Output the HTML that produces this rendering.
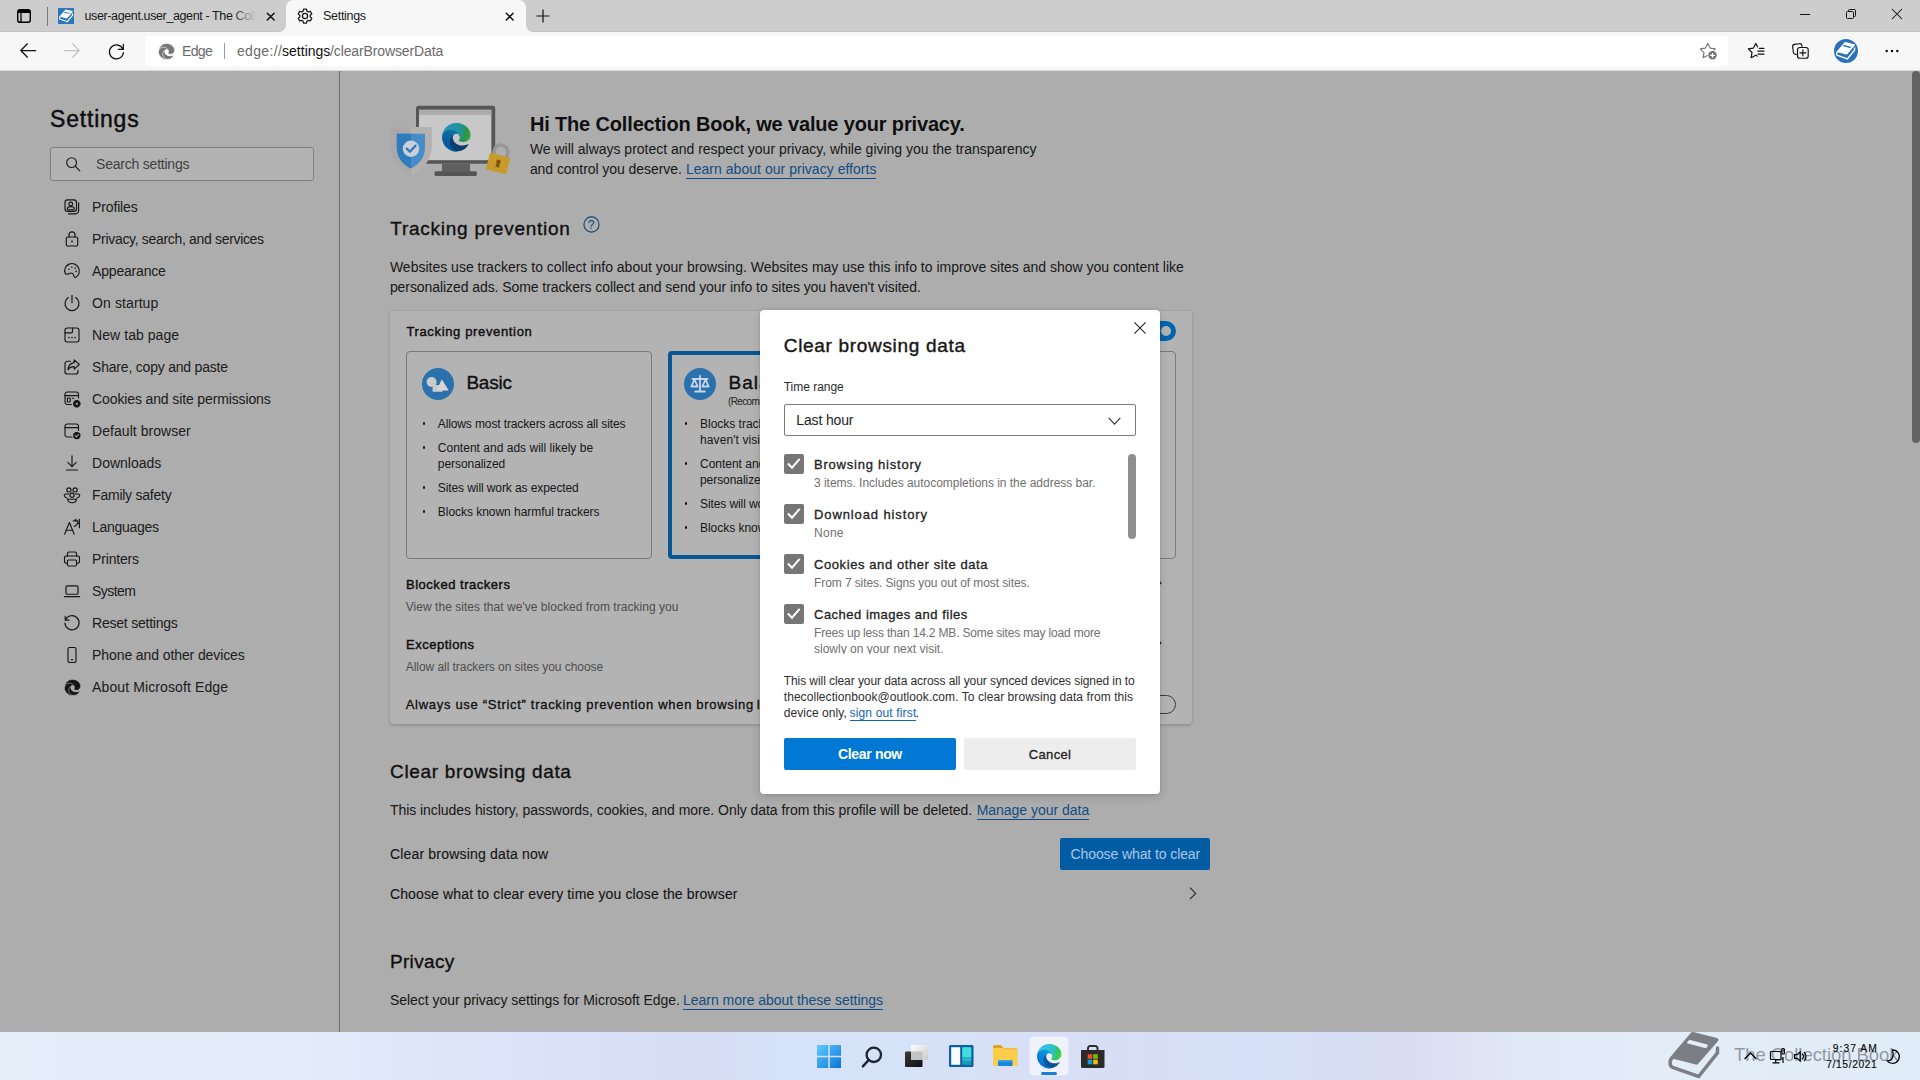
<!DOCTYPE html><html lang="en"><head><meta charset="utf-8"><title>Settings</title><style>

*{margin:0;padding:0;box-sizing:border-box}
html,body{width:1920px;height:1080px;overflow:hidden;background:#f7f7f7;font-family:"Liberation Sans",sans-serif}
.t{position:absolute;white-space:nowrap;display:block}
.i{position:absolute;overflow:visible}
.b{position:absolute}
a{color:inherit}

</style></head><body>
<div class="b" style="left:339px;top:71px;width:1px;height:961px;background:#9c9c9c"></div>
<span class="t" style="left:50.10px;top:107.62px;font-size:23px;line-height:23px;color:#141414;-webkit-text-stroke:0.45px currentColor;letter-spacing:0.784px;">Settings</span>
<div class="b" style="left:50px;top:147px;width:264px;height:34px;border:1px solid #b6b6b6;border-radius:3px;background:#fff"></div>
<svg class="i" style="left:65px;top:156px" width="16" height="16" viewBox="0 0 16 16" ><circle cx="6.600" cy="6.600" r="4.900" fill="none" stroke="#222" stroke-width="1.150"/><path d="M10.200 10.200l4.600 4.600" stroke="#222" stroke-width="1.150" stroke-linecap="round"/></svg>
<span class="t" style="left:96.10px;top:157.12px;font-size:14px;line-height:14px;color:#5c5c5c;letter-spacing:-0.221px;">Search settings</span>
<svg class="i" style="left:62px;top:197px" width="20" height="20" viewBox="0 0 20 20" ><g fill="none" stroke="#1f1f1f" stroke-width="1.15" stroke-linecap="round" stroke-linejoin="round"><rect x="3" y="2.8" width="11.5" height="11.5" rx="2.6"/><circle cx="8.75" cy="7" r="1.9"/><path d="M5.3 11.6c0-1.3 1.2-2 3.45-2s3.45.7 3.45 2c0 .9-.5 1.3-1.2 1.3H6.5c-.7 0-1.2-.4-1.2-1.3z"/><path d="M16.6 5.8v8a3 3 0 0 1-3 3H6.4"/></g></svg>
<span class="t" style="left:92.10px;top:200.12px;font-size:14px;line-height:14px;color:#2b2b2b;letter-spacing:-0.155px;">Profiles</span>
<svg class="i" style="left:62px;top:229px" width="20" height="20" viewBox="0 0 20 20" ><g fill="none" stroke="#1f1f1f" stroke-width="1.15" stroke-linecap="round" stroke-linejoin="round"><rect x="4.3" y="8" width="11.4" height="9" rx="1.6"/><path d="M7 8V5.8a3 3 0 0 1 6 0V8"/><circle cx="10" cy="12.5" r="0.9" fill="#1f1f1f" stroke="none"/></g></svg>
<span class="t" style="left:92.10px;top:232.12px;font-size:14px;line-height:14px;color:#2b2b2b;letter-spacing:-0.323px;">Privacy, search, and services</span>
<svg class="i" style="left:62px;top:261px" width="20" height="20" viewBox="0 0 20 20" ><g fill="none" stroke="#1f1f1f" stroke-width="1.15" stroke-linecap="round" stroke-linejoin="round"><path d="M3.2 12.2C1.7 8.6 3.5 4.6 7.2 3.1c3.7-1.5 7.9.2 9.4 3.9 1.3 3.2.6 6.6-2.1 8.9-1.1.9-2.5.2-2.7-1-.2-1.300-.5-2.200-1.700-2.700-1.500-.600-2.300.200-3.600.700-1.300.500-2.800.500-3.300-.700z"/><circle cx="7" cy="8.300" r=".8" fill="#1f1f1f" stroke="none"/><circle cx="9.800" cy="6.200" r=".8" fill="#1f1f1f" stroke="none"/><circle cx="13" cy="7.300" r=".8" fill="#1f1f1f" stroke="none"/><circle cx="14.200" cy="10.400" r=".8" fill="#1f1f1f" stroke="none"/></g></svg>
<span class="t" style="left:92.10px;top:264.12px;font-size:14px;line-height:14px;color:#2b2b2b;letter-spacing:-0.191px;">Appearance</span>
<svg class="i" style="left:62px;top:293px" width="20" height="20" viewBox="0 0 20 20" ><g fill="none" stroke="#1f1f1f" stroke-width="1.15" stroke-linecap="round" stroke-linejoin="round"><path d="M10 2.500v7.200"/><path d="M6.400 4.600a7 7 0 1 0 7.200 0"/></g></svg>
<span class="t" style="left:92.10px;top:296.12px;font-size:14px;line-height:14px;color:#2b2b2b;letter-spacing:0.092px;">On startup</span>
<svg class="i" style="left:62px;top:325px" width="20" height="20" viewBox="0 0 20 20" ><g fill="none" stroke="#1f1f1f" stroke-width="1.15" stroke-linecap="round" stroke-linejoin="round"><rect x="3" y="3" width="14" height="14" rx="2.200"/><path d="M3 7.800h6.200c.8 0 1.300-.5 1.300-1.300V3"/><circle cx="7" cy="12.600" r=".8" fill="#1f1f1f" stroke="none"/><circle cx="10" cy="12.600" r=".8" fill="#1f1f1f" stroke="none"/><circle cx="13" cy="12.600" r=".8" fill="#1f1f1f" stroke="none"/></g></svg>
<span class="t" style="left:92.10px;top:328.12px;font-size:14px;line-height:14px;color:#2b2b2b;letter-spacing:0.054px;">New tab page</span>
<svg class="i" style="left:62px;top:357px" width="20" height="20" viewBox="0 0 20 20" ><g fill="none" stroke="#1f1f1f" stroke-width="1.15" stroke-linecap="round" stroke-linejoin="round"><path d="M8.500 4.200H5.600A2.600 2.600 0 0 0 3 6.800v7.600A2.600 2.600 0 0 0 5.600 17h7.800a2.600 2.600 0 0 0 2.600-2.600v-1.200"/><path d="M12.200 2.800l5.100 4.700-5.100 4.700V9.600c-2.900 0-4.800 1-6.200 3.200.4-4 2.400-6.700 6.200-7.200z"/></g></svg>
<span class="t" style="left:92.10px;top:360.12px;font-size:14px;line-height:14px;color:#2b2b2b;letter-spacing:-0.210px;">Share, copy and paste</span>
<svg class="i" style="left:62px;top:389px" width="20" height="20" viewBox="0 0 20 20" ><g fill="none" stroke="#1f1f1f" stroke-width="1.15" stroke-linecap="round" stroke-linejoin="round"><path d="M16.500 9V5.200A2.200 2.200 0 0 0 14.300 3H5.200A2.200 2.200 0 0 0 3 5.200v8.100a2.200 2.200 0 0 0 2.200 2.200H9.500"/><path d="M3 6.600h13.500"/><rect x="5.400" y="9" width="2.800" height="4" rx=".4"/><path d="M10.400 9.200h1.400"/><circle cx="14.800" cy="14.800" r="3" fill="#1f1f1f" stroke="#1f1f1f" stroke-width="1.600" stroke-dasharray="1.500 .86"/><circle cx="14.800" cy="14.800" r="1.100" fill="#f7f7f7" stroke="none"/></g></svg>
<span class="t" style="left:92.10px;top:392.12px;font-size:14px;line-height:14px;color:#2b2b2b;letter-spacing:-0.126px;">Cookies and site permissions</span>
<svg class="i" style="left:62px;top:421px" width="20" height="20" viewBox="0 0 20 20" ><g fill="none" stroke="#1f1f1f" stroke-width="1.15" stroke-linecap="round" stroke-linejoin="round"><path d="M16.500 9.500V5.200A2.200 2.200 0 0 0 14.300 3H5.200A2.200 2.200 0 0 0 3 5.200v8.600A2.200 2.200 0 0 0 5.200 16H10"/><path d="M3 6.600h13.500"/><circle cx="14.800" cy="14.600" r="3.700" fill="#1f1f1f" stroke="none"/><path d="M13.100 14.700l1.200 1.200 2.200-2.400" stroke="#f7f7f7" stroke-width="1.100"/></g></svg>
<span class="t" style="left:92.10px;top:424.12px;font-size:14px;line-height:14px;color:#2b2b2b;letter-spacing:0.040px;">Default browser</span>
<svg class="i" style="left:62px;top:453px" width="20" height="20" viewBox="0 0 20 20" ><g fill="none" stroke="#1f1f1f" stroke-width="1.15" stroke-linecap="round" stroke-linejoin="round"><path d="M10 2.800v10.600"/><path d="M5.800 9.400l4.200 4.200 4.200-4.200"/><path d="M4.500 17h11"/></g></svg>
<span class="t" style="left:92.10px;top:456.12px;font-size:14px;line-height:14px;color:#2b2b2b;letter-spacing:-0.008px;">Downloads</span>
<svg class="i" style="left:62px;top:485px" width="20" height="20" viewBox="0 0 20 20" ><g fill="none" stroke="#1f1f1f" stroke-width="1.15" stroke-linecap="round" stroke-linejoin="round"><circle cx="6.900" cy="4.900" r="2.100"/><circle cx="13.100" cy="4.900" r="2.100"/><circle cx="10" cy="10.200" r="2.100"/><path d="M6.600 9H3.900c-1.200 0-1.800.9-1.500 1.900.3.900 1.100 1.900 3 2.300"/><path d="M13.400 9h2.700c1.200 0 1.800.9 1.500 1.900-.3.900-1.100 1.900-3 2.300"/><path d="M5.600 14.200h8.800c0 1.900-1.600 3.500-4.400 3.500s-4.400-1.600-4.400-3.500z"/></g></svg>
<span class="t" style="left:92.10px;top:488.12px;font-size:14px;line-height:14px;color:#2b2b2b;letter-spacing:-0.239px;">Family safety</span>
<svg class="i" style="left:62px;top:517px" width="20" height="20" viewBox="0 0 20 20" ><g fill="none" stroke="#1f1f1f" stroke-width="1.15" stroke-linecap="round" stroke-linejoin="round"><path d="M2.600 17.200L7.400 5.500l4.800 11.700"/><path d="M4.400 13.200h6"/><path d="M11.300 3.800h4.600c0 2.900-1.400 4.700-3.600 5.700"/><path d="M13.500 2.300v1.500"/><path d="M17.400 2.300v8.400"/><path d="M15.900 6.300h1.500"/></g></svg>
<span class="t" style="left:92.10px;top:520.12px;font-size:14px;line-height:14px;color:#2b2b2b;letter-spacing:-0.312px;">Languages</span>
<svg class="i" style="left:62px;top:549px" width="20" height="20" viewBox="0 0 20 20" ><g fill="none" stroke="#1f1f1f" stroke-width="1.15" stroke-linecap="round" stroke-linejoin="round"><path d="M5.500 7V4.600A1.600 1.600 0 0 1 7.100 3h5.800a1.600 1.600 0 0 1 1.600 1.600V7"/><path d="M5.300 14.200H4.200a1.700 1.700 0 0 1-1.700-1.700V8.700A1.700 1.700 0 0 1 4.200 7h11.600a1.700 1.700 0 0 1 1.700 1.700v3.800a1.700 1.700 0 0 1-1.700 1.700h-1.100"/><rect x="5.400" y="11" width="9.200" height="6" rx="1.200"/></g></svg>
<span class="t" style="left:92.10px;top:552.12px;font-size:14px;line-height:14px;color:#2b2b2b;letter-spacing:-0.191px;">Printers</span>
<svg class="i" style="left:62px;top:581px" width="20" height="20" viewBox="0 0 20 20" ><g fill="none" stroke="#1f1f1f" stroke-width="1.15" stroke-linecap="round" stroke-linejoin="round"><rect x="4" y="4.800" width="12" height="8.400" rx="1.300"/><path d="M2.300 15.600h15.400"/></g></svg>
<span class="t" style="left:92.10px;top:584.12px;font-size:14px;line-height:14px;color:#2b2b2b;letter-spacing:-0.557px;">System</span>
<svg class="i" style="left:62px;top:613px" width="20" height="20" viewBox="0 0 20 20" ><g fill="none" stroke="#1f1f1f" stroke-width="1.15" stroke-linecap="round" stroke-linejoin="round"><path d="M3.200 3.200v3.900h3.900"/><path d="M3.500 6.900A7.100 7.100 0 1 1 2.900 10"/></g></svg>
<span class="t" style="left:92.10px;top:616.12px;font-size:14px;line-height:14px;color:#2b2b2b;letter-spacing:-0.232px;">Reset settings</span>
<svg class="i" style="left:62px;top:645px" width="20" height="20" viewBox="0 0 20 20" ><g fill="none" stroke="#1f1f1f" stroke-width="1.15" stroke-linecap="round" stroke-linejoin="round"><rect x="6" y="2.500" width="8" height="15" rx="1.600"/><path d="M9 14.700h2"/></g></svg>
<span class="t" style="left:92.10px;top:648.12px;font-size:14px;line-height:14px;color:#2b2b2b;letter-spacing:-0.100px;">Phone and other devices</span>
<svg class="i" style="left:63.5px;top:678.5px" width="17" height="17" viewBox="-6 -6 268 268" ><path d="M231.05 190.54a93.73 93.73 0 01-10.54 4.71 101.87 101.87 0 01-35.9 6.46c-47.32 0-88.54-32.55-88.54-74.32A31.48 31.48 0 01112.5 100.1c-42.8 1.8-53.8 46.4-53.8 72.53 0 73.88 68.09 81.37 82.76 81.37 7.91 0 19.84-2.3 27-4.56l1.31-.44a128.34 128.34 0 0066.6-52.8 4 4 0 00-5.32-5.66z" fill="#1f1f1f"/><path d="M105.73 241.42a79.2 79.2 0 01-22.74-21.34 80.72 80.72 0 0129.53-120c3.12-1.47 8.45-4.13 15.54-4a32.35 32.35 0 0125.69 13 31.88 31.88 0 016.36 18.66c0-.21 24.46-79.6-80-79.6-43.9 0-80 41.66-80 78.21a130.15 130.15 0 0012.11 56 128 128 0 00156.38 67.11 75.55 75.55 0 01-62.78-8z" fill="#1f1f1f" stroke="#f7f7f7" stroke-width="9"/><path d="M152.33 148.86c-.81 1.05-3.3 2.5-3.3 5.66 0 2.61 1.7 5.12 4.72 7.23 14.38 10 41.49 8.68 41.56 8.68a59.56 59.56 0 0030.27-8.35A61.38 61.38 0 00256 109.2c.26-22.41-8-37.31-11.34-43.91C223.48 23.86 177.74 0 128 0A128 128 0 000 126.2c.48-36.54 36.8-66.05 80-66.05 3.5 0 23.46.34 42 10.07 16.34 8.58 24.9 18.94 30.85 29.21 6.18 10.67 7.28 24.15 7.28 29.52s-2.74 13.33-7.8 19.91z" fill="#1f1f1f" stroke="#f7f7f7" stroke-width="9"/></svg>
<span class="t" style="left:92.10px;top:680.12px;font-size:14px;line-height:14px;color:#2b2b2b;letter-spacing:0.107px;">About Microsoft Edge</span>
<span class="t" style="left:529.90px;top:114.12px;font-size:20px;line-height:20px;color:#161616;font-weight:700;letter-spacing:-0.155px;">Hi The Collection Book, we value your privacy.</span>
<span class="t" style="left:529.90px;top:142.12px;font-size:14px;line-height:14px;color:#262626;letter-spacing:-0.012px;">We will always protect and respect your privacy, while giving you the transparency</span>
<span class="t" style="left:529.90px;top:162.12px;font-size:14px;line-height:14px;color:#262626;letter-spacing:-0.058px;">and control you deserve.</span>
<span class="t" style="left:685.90px;top:162.12px;font-size:14px;line-height:14px;color:#1a6dbb;letter-spacing:0.032px;">Learn about our privacy efforts</span><div class="b" style="left:685.9px;top:178.25px;width:190.6px;height:1px;background:#1a6dbb"></div>
<span class="t" style="left:390.30px;top:219.12px;font-size:19px;line-height:19px;color:#161616;-webkit-text-stroke:0.35px currentColor;letter-spacing:0.746px;">Tracking prevention</span>
<svg class="i" style="left:582.5px;top:216.3px" width="17" height="17" viewBox="0 0 17 17" ><circle cx="8.500" cy="8.500" r="7.600" fill="none" stroke="#0f65b3" stroke-width="1.100"/></svg><span class="t" style="left:587.70px;top:219.12px;font-size:12px;line-height:12px;color:#0f65b3;">?</span>
<span class="t" style="left:389.90px;top:260.12px;font-size:14px;line-height:14px;color:#262626;">Websites use trackers to collect info about your browsing. Websites may use this info to improve sites and show you content like</span>
<span class="t" style="left:389.90px;top:280.12px;font-size:14px;line-height:14px;color:#262626;letter-spacing:-0.072px;">personalized ads. Some trackers collect and send your info to sites you haven't visited.</span>
<div class="b" style="left:390px;top:311px;width:802px;height:413px;background:#fff;border-radius:4px;box-shadow:0 1.600px 3.600px rgba(0,0,0,.13),0 0 2.900px rgba(0,0,0,.11)"></div>
<span class="t" style="left:406.40px;top:325.12px;font-size:13px;line-height:13px;color:#161616;-webkit-text-stroke:0.42px currentColor;letter-spacing:0.648px;">Tracking prevention</span>
<div class="b" style="left:1136px;top:321px;width:40px;height:20px;border-radius:10px;background:#008ffa"></div><div class="b" style="left:1161.200px;top:326px;width:10px;height:10px;border-radius:5px;background:#fff"></div>
<div class="b" style="left:406px;top:351px;width:246px;height:207.500px;border:1px solid #aeaeae;border-radius:4px"></div>
<span class="t" style="left:466.40px;top:373.12px;font-size:19px;line-height:19px;color:#161616;-webkit-text-stroke:0.35px currentColor;letter-spacing:-0.242px;">Basic</span>
<div class="b" style="left:422.5px;top:421.8px;width:2.800px;height:2.800px;background:#222;border-radius:1.400px"></div><span class="t" style="left:437.80px;top:418.12px;font-size:12px;line-height:12px;color:#262626;letter-spacing:-0.121px;">Allows most trackers across all sites</span><div class="b" style="left:422.5px;top:445.8px;width:2.800px;height:2.800px;background:#222;border-radius:1.400px"></div><span class="t" style="left:437.80px;top:442.12px;font-size:12px;line-height:12px;color:#262626;letter-spacing:0.018px;">Content and ads will likely be</span><span class="t" style="left:437.80px;top:458.12px;font-size:12px;line-height:12px;color:#262626;letter-spacing:-0.059px;">personalized</span><div class="b" style="left:422.5px;top:485.8px;width:2.800px;height:2.800px;background:#222;border-radius:1.400px"></div><span class="t" style="left:437.80px;top:482.12px;font-size:12px;line-height:12px;color:#262626;letter-spacing:-0.092px;">Sites will work as expected</span><div class="b" style="left:422.5px;top:509.8px;width:2.800px;height:2.800px;background:#222;border-radius:1.400px"></div><span class="t" style="left:437.80px;top:506.12px;font-size:12px;line-height:12px;color:#262626;letter-spacing:-0.037px;">Blocks known harmful trackers</span>
<div class="b" style="left:668px;top:351px;width:246px;height:207.500px;border:4px solid #0c7bd3;border-radius:4px"></div>
<span class="t" style="left:728.50px;top:373.12px;font-size:19px;line-height:19px;color:#161616;-webkit-text-stroke:0.35px currentColor;letter-spacing:1.038px;">Balanced</span>
<span class="t" style="left:728.00px;top:396.62px;font-size:10px;line-height:10px;color:#333;letter-spacing:-0.624px;">(Recommended)</span>
<div class="b" style="left:684.7px;top:421.8px;width:2.800px;height:2.800px;background:#222;border-radius:1.400px"></div><span class="t" style="left:700.00px;top:418.12px;font-size:12px;line-height:12px;color:#262626;letter-spacing:-0.013px;">Blocks trackers from sites you</span><span class="t" style="left:700.00px;top:434.12px;font-size:12px;line-height:12px;color:#262626;letter-spacing:0.095px;">haven't visited</span><div class="b" style="left:684.7px;top:461.8px;width:2.800px;height:2.800px;background:#222;border-radius:1.400px"></div><span class="t" style="left:700.00px;top:458.12px;font-size:12px;line-height:12px;color:#262626;letter-spacing:-0.013px;">Content and ads will likely be less</span><span class="t" style="left:700.00px;top:474.12px;font-size:12px;line-height:12px;color:#262626;letter-spacing:-0.059px;">personalized</span><div class="b" style="left:684.7px;top:501.8px;width:2.800px;height:2.800px;background:#222;border-radius:1.400px"></div><span class="t" style="left:700.00px;top:498.12px;font-size:12px;line-height:12px;color:#262626;letter-spacing:-0.092px;">Sites will work as expected</span><div class="b" style="left:684.7px;top:525.8px;width:2.800px;height:2.800px;background:#222;border-radius:1.400px"></div><span class="t" style="left:700.00px;top:522.12px;font-size:12px;line-height:12px;color:#262626;letter-spacing:-0.037px;">Blocks known harmful trackers</span>
<div class="b" style="left:930px;top:351px;width:246px;height:207.500px;border:1px solid #aeaeae;border-radius:4px"></div>
<span class="t" style="left:406.00px;top:578.12px;font-size:13px;line-height:13px;color:#161616;-webkit-text-stroke:0.42px currentColor;letter-spacing:0.520px;">Blocked trackers</span>
<span class="t" style="left:405.75px;top:601.12px;font-size:12px;line-height:12px;color:#707070;letter-spacing:0.037px;">View the sites that we've blocked from tracking you</span>
<span class="t" style="left:406.00px;top:638.12px;font-size:13px;line-height:13px;color:#161616;-webkit-text-stroke:0.42px currentColor;letter-spacing:0.501px;">Exceptions</span>
<span class="t" style="left:405.75px;top:661.12px;font-size:12px;line-height:12px;color:#707070;letter-spacing:-0.054px;">Allow all trackers on sites you choose</span>
<span class="t" style="left:405.75px;top:698.12px;font-size:13px;line-height:13px;color:#161616;-webkit-text-stroke:0.3px currentColor;letter-spacing:0.694px;">Always use “Strict” tracking prevention when browsing</span>
<span class="t" style="left:756.50px;top:698.12px;font-size:13px;line-height:13px;color:#161616;-webkit-text-stroke:0.3px currentColor;letter-spacing:0.711px;">InPrivate</span>
<svg class="i" style="left:1156px;top:578px" width="6" height="10" viewBox="0 0 6 10" ><path d="M.8 .8L5 5 .8 9.200" fill="none" stroke="#333" stroke-width="1.100"/></svg>
<svg class="i" style="left:1156px;top:638px" width="6" height="10" viewBox="0 0 6 10" ><path d="M.8 .8L5 5 .8 9.200" fill="none" stroke="#333" stroke-width="1.100"/></svg>
<div class="b" style="left:1136px;top:694.500px;width:40px;height:19.500px;border-radius:10px;border:1px solid #555"></div>
<span class="t" style="left:390.10px;top:762.12px;font-size:19px;line-height:19px;color:#161616;-webkit-text-stroke:0.35px currentColor;letter-spacing:0.656px;">Clear browsing data</span>
<span class="t" style="left:389.90px;top:803.12px;font-size:14px;line-height:14px;color:#262626;letter-spacing:-0.043px;">This includes history, passwords, cookies, and more. Only data from this profile will be deleted.</span>
<span class="t" style="left:976.70px;top:803.12px;font-size:14px;line-height:14px;color:#1a6dbb;letter-spacing:-0.024px;">Manage your data</span><div class="b" style="left:976.7px;top:819px;width:112.5px;height:1px;background:#1a6dbb"></div>
<span class="t" style="left:389.90px;top:847.12px;font-size:14px;line-height:14px;color:#1c1c1c;-webkit-text-stroke:0.12px currentColor;letter-spacing:0.187px;">Clear browsing data now</span>
<span class="t" style="left:389.90px;top:887.12px;font-size:14px;line-height:14px;color:#1c1c1c;-webkit-text-stroke:0.12px currentColor;letter-spacing:0.145px;">Choose what to clear every time you close the browser</span>
<svg class="i" style="left:1189.2px;top:886.8px" width="8" height="13" viewBox="0 0 8 13" ><path d="M.9 .7L6.700 6.400 .9 12.100" fill="none" stroke="#3a3a3a" stroke-width="1.150"/></svg>
<span class="t" style="left:389.90px;top:952.12px;font-size:19px;line-height:19px;color:#161616;-webkit-text-stroke:0.35px currentColor;letter-spacing:0.351px;">Privacy</span>
<span class="t" style="left:389.90px;top:993.12px;font-size:14px;line-height:14px;color:#262626;letter-spacing:-0.036px;">Select your privacy settings for Microsoft Edge.</span>
<span class="t" style="left:683.10px;top:993.12px;font-size:14px;line-height:14px;color:#1a6dbb;letter-spacing:-0.030px;">Learn more about these settings</span><div class="b" style="left:683.1px;top:1009px;width:199.9px;height:1px;background:#1a6dbb"></div>
<div class="b" style="left:1912px;top:71px;width:8px;height:372px;background:#8c8c8c;border-radius:4.200px"></div>
<div class="b" style="left:0;top:71px;width:1920px;height:961px;background:rgba(0,0,0,.298)"></div>
<svg class="i" style="left:388px;top:100px" width="126" height="80" viewBox="0 0 126 80" ><rect x="28" y="5.800" width="79.200" height="58" rx="2.500" fill="#565656"/><rect x="31" y="9.800" width="72.400" height="50.400" fill="#c8c8c8"/><rect x="31" y="9.800" width="72.400" height="5" fill="#ababab"/><path d="M54 63.800h28v8H54z" fill="#5f5f5f"/><rect x="46.600" y="71.200" width="42.200" height="4.800" rx="1.200" fill="#555"/><path d="M2 27h41.800v19c0 13.500-8.500 24-20.900 29.500C10.500 70 2 59.500 2 46z" fill="#b4b1b0"/><path d="M2 27h20.900v48.500C10.500 70 2 59.500 2 46z" fill="#aaa8a8"/><path d="M8.800 33.800H37v13.200c0 10-5.500 17.500-14.100 21.500C14.300 64.500 8.800 57 8.800 47z" fill="#468cc8"/><path d="M8.800 33.800h14.100v34.700C14.300 64.500 8.800 57 8.800 47z" fill="#2f7cbd"/><circle cx="23" cy="48.800" r="8.200" fill="#c9d0da"/><path d="M18.800 48.600l3.100 3.100 5.600-6" fill="none" stroke="#3478b9" stroke-width="2.300" stroke-linecap="round" stroke-linejoin="round"/><g transform="translate(0 .9) rotate(14 109.500 63)"><path d="M103.200 55v-4.500a6.800 6.800 0 0 1 13.600 0V55" fill="none" stroke="#979797" stroke-width="3.400"/><rect x="99.500" y="54" width="21" height="17" rx="1.800" fill="#c89b28"/><circle cx="110" cy="60.800" r="2.300" fill="#78550a"/><path d="M108.900 61h2.200l.9 5.200h-4z" fill="#78550a"/></g></svg><svg class="i" style="left:441.8px;top:122.8px" width="28.6" height="28.6" viewBox="0 0 256 256" ><defs><linearGradient id="eah" x1="58" y1="177" x2="237" y2="177" gradientUnits="userSpaceOnUse"><stop offset="0" stop-color="#0a4278"/><stop offset="1" stop-color="#0d3866"/></linearGradient><linearGradient id="ebh" x1="157" y1="100" x2="46" y2="221" gradientUnits="userSpaceOnUse"><stop offset="0" stop-color="#1577ab"/><stop offset=".16" stop-color="#116fa8"/><stop offset=".67" stop-color="#0660a0"/><stop offset="1" stop-color="#005a9e"/></linearGradient><radialGradient id="ech" cx="25" cy="47" r="280" gradientUnits="userSpaceOnUse"><stop offset="0" stop-color="#2a92b6"/><stop offset=".25" stop-color="#2493a9"/><stop offset=".5" stop-color="#21939f"/><stop offset=".72" stop-color="#2a9740"/><stop offset="1" stop-color="#4fb456"/></radialGradient></defs><path d="M231.05 190.54a93.73 93.73 0 01-10.54 4.71 101.87 101.87 0 01-35.9 6.46c-47.32 0-88.54-32.55-88.54-74.32A31.48 31.48 0 01112.5 100.1c-42.8 1.8-53.8 46.4-53.8 72.53 0 73.88 68.09 81.37 82.76 81.37 7.91 0 19.84-2.3 27-4.56l1.31-.44a128.34 128.34 0 0066.6-52.8 4 4 0 00-5.32-5.66z" fill="url(#eah)"/><path d="M105.73 241.42a79.2 79.2 0 01-22.74-21.34 80.72 80.72 0 0129.53-120c3.12-1.47 8.45-4.13 15.54-4a32.35 32.35 0 0125.69 13 31.88 31.88 0 016.36 18.66c0-.21 24.46-79.6-80-79.6-43.9 0-80 41.66-80 78.21a130.15 130.15 0 0012.11 56 128 128 0 00156.38 67.11 75.55 75.55 0 01-62.78-8z" fill="url(#ebh)"/><path d="M152.33 148.86c-.81 1.05-3.3 2.5-3.3 5.66 0 2.61 1.7 5.12 4.72 7.23 14.38 10 41.49 8.68 41.56 8.68a59.56 59.56 0 0030.27-8.35A61.38 61.38 0 00256 109.2c.26-22.41-8-37.31-11.34-43.91C223.48 23.86 177.74 0 128 0A128 128 0 000 126.2c.48-36.54 36.8-66.05 80-66.05 3.5 0 23.46.34 42 10.07 16.34 8.58 24.9 18.94 30.85 29.21 6.18 10.67 7.28 24.15 7.28 29.52s-2.74 13.33-7.8 19.91z" fill="url(#ech)"/></svg>
<svg class="i" style="left:422.1px;top:367.75px" width="32" height="32" viewBox="0 0 32 32" ><circle cx="16" cy="16" r="16" fill="#2a71ae"/><circle cx="9.600" cy="14" r="5" fill="#cbcbcb"/><rect x="10.600" y="17" width="10" height="6.800" fill="#cbcbcb"/><path d="M19.800 11.200l6.900 11.400H14.600z" fill="#d8d5d3"/></svg>
<svg class="i" style="left:683.7px;top:367.75px" width="32" height="32" viewBox="0 0 32 32" ><circle cx="16" cy="16" r="16" fill="#2a71ae"/><g fill="none" stroke="#c9d6e6" stroke-width="1.800" stroke-linecap="round" stroke-linejoin="round"><path d="M16 8v15M11.200 23.500h9.600M8.500 11h15"/><path d="M10.500 11.500L7.300 18.500h6.400z"/><path d="M21.500 11.500l-3.200 7h6.400z"/></g></svg>
<div class="b" style="left:1060px;top:838px;width:150px;height:32px;border-radius:2px;background:#025ca3"></div>
<span class="t" style="left:1070.50px;top:847.12px;font-size:14px;line-height:14px;color:#abc6e4;letter-spacing:-0.096px;">Choose what to clear</span>
<div class="b" style="left:760px;top:310px;width:400px;height:484px;background:#fff;border-radius:4px;box-shadow:0 3px 10px rgba(0,0,0,.14),0 0 3px rgba(0,0,0,.12)"></div>
<svg class="i" style="left:1134.25px;top:322px" width="12" height="12" viewBox="0 0 12 12" ><path d="M.4 .4l11.200 11.200M11.600 .4L.4 11.600" stroke="#222" stroke-width="1.050"/></svg>
<span class="t" style="left:783.75px;top:336.12px;font-size:19px;line-height:19px;color:#171717;-webkit-text-stroke:0.4px currentColor;letter-spacing:0.681px;">Clear browsing data</span>
<span class="t" style="left:783.75px;top:381.12px;font-size:12px;line-height:12px;color:#2b2b2b;letter-spacing:-0.028px;">Time range</span>
<div class="b" style="left:784px;top:404px;width:352px;height:31.500px;border:1px solid #7a7a7a;border-radius:2px;background:#fff"></div>
<span class="t" style="left:796.25px;top:413.12px;font-size:14px;line-height:14px;color:#1f1f1f;letter-spacing:-0.141px;">Last hour</span>
<svg class="i" style="left:1107.5px;top:416.5px" width="13" height="8.5" viewBox="0 0 13 8.500" ><path d="M.7 .8l5.800 6.300L12.300 .8" fill="none" stroke="#333" stroke-width="1.100"/></svg>
<div class="b" style="left:784.250px;top:454.25px;width:19.500px;height:19.500px;background:#767676;border-radius:2px"></div><svg class="i" style="left:784.25px;top:454.25px" width="19.5" height="19.5" viewBox="0 0 19.500 19.500" ><path d="M4.600 10.200l3.400 3.500 7-8" fill="none" stroke="#fff" stroke-width="2" stroke-linecap="square"/></svg>
<span class="t" style="left:814.00px;top:458.12px;font-size:13px;line-height:13px;color:#1f1f1f;-webkit-text-stroke:0.32px currentColor;letter-spacing:0.775px;">Browsing history</span>
<span class="t" style="left:814.00px;top:477.12px;font-size:12px;line-height:12px;color:#707070;letter-spacing:-0.026px;">3 items. Includes autocompletions in the address bar.</span>
<div class="b" style="left:784.250px;top:504.25px;width:19.500px;height:19.500px;background:#767676;border-radius:2px"></div><svg class="i" style="left:784.25px;top:504.25px" width="19.5" height="19.5" viewBox="0 0 19.500 19.500" ><path d="M4.600 10.200l3.400 3.500 7-8" fill="none" stroke="#fff" stroke-width="2" stroke-linecap="square"/></svg>
<span class="t" style="left:814.00px;top:508.12px;font-size:13px;line-height:13px;color:#1f1f1f;-webkit-text-stroke:0.32px currentColor;letter-spacing:0.885px;">Download history</span>
<span class="t" style="left:814.00px;top:527.12px;font-size:12px;line-height:12px;color:#707070;letter-spacing:0.271px;">None</span>
<div class="b" style="left:784.250px;top:554.25px;width:19.500px;height:19.500px;background:#767676;border-radius:2px"></div><svg class="i" style="left:784.25px;top:554.25px" width="19.5" height="19.5" viewBox="0 0 19.500 19.500" ><path d="M4.600 10.200l3.400 3.500 7-8" fill="none" stroke="#fff" stroke-width="2" stroke-linecap="square"/></svg>
<span class="t" style="left:814.00px;top:558.12px;font-size:13px;line-height:13px;color:#1f1f1f;-webkit-text-stroke:0.32px currentColor;letter-spacing:0.585px;">Cookies and other site data</span>
<span class="t" style="left:814.00px;top:577.12px;font-size:12px;line-height:12px;color:#707070;letter-spacing:-0.090px;">From 7 sites. Signs you out of most sites.</span>
<div class="b" style="left:784.250px;top:604.25px;width:19.500px;height:19.500px;background:#767676;border-radius:2px"></div><svg class="i" style="left:784.25px;top:604.25px" width="19.5" height="19.5" viewBox="0 0 19.500 19.500" ><path d="M4.600 10.200l3.400 3.500 7-8" fill="none" stroke="#fff" stroke-width="2" stroke-linecap="square"/></svg>
<span class="t" style="left:814.00px;top:608.12px;font-size:13px;line-height:13px;color:#1f1f1f;-webkit-text-stroke:0.32px currentColor;letter-spacing:0.495px;">Cached images and files</span>
<span class="t" style="left:814.00px;top:627.12px;font-size:12px;line-height:12px;color:#707070;letter-spacing:-0.176px;">Frees up less than 14.2 MB. Some sites may load more</span>
<span class="t" style="left:814.00px;top:643.12px;font-size:12px;line-height:12px;color:#707070;letter-spacing:0.004px;">slowly on your next visit.</span>
<div class="b" style="left:784px;top:654px;width:352px;height:12px;background:#fff"></div>
<div class="b" style="left:1128px;top:454.250px;width:7.750px;height:84.500px;background:#8e8e8e;border-radius:4px"></div>
<span class="t" style="left:783.75px;top:675.12px;font-size:12px;line-height:12px;color:#2e2e2e;letter-spacing:-0.076px;">This will clear your data across all your synced devices signed in to</span>
<span class="t" style="left:783.75px;top:691.12px;font-size:12px;line-height:12px;color:#2e2e2e;letter-spacing:0.061px;">thecollectionbook@outlook.com. To clear browsing data from this</span>
<span class="t" style="left:783.75px;top:707.12px;font-size:12px;line-height:12px;color:#2e2e2e;letter-spacing:0.047px;">device only,</span>
<span class="t" style="left:849.50px;top:707.12px;font-size:12px;line-height:12px;color:#0f65b3;letter-spacing:0.157px;">sign out first</span>
<div class="b" style="left:849.500px;top:719.600px;width:66.500px;height:1px;background:#0f65b3"></div>
<span class="t" style="left:915.80px;top:707.12px;font-size:12px;line-height:12px;color:#2e2e2e;">.</span>
<div class="b" style="left:784.250px;top:738.250px;width:171.500px;height:31.500px;background:#0078d4;border-radius:2px"></div>
<span class="t" style="left:838.00px;top:747.12px;font-size:14px;line-height:14px;color:#fff;font-weight:700;letter-spacing:-0.332px;">Clear now</span>
<div class="b" style="left:964.250px;top:738.250px;width:171.500px;height:31.500px;background:#ededed;border-radius:2px"></div>
<span class="t" style="left:1028.75px;top:748.12px;font-size:13px;line-height:13px;color:#1f1f1f;-webkit-text-stroke:0.33px currentColor;letter-spacing:0.356px;">Cancel</span>
<div class="b" style="left:0;top:0;width:1920px;height:32px;background:#cdcdcd"></div>
<div class="b" style="left:0;top:31px;width:1920px;height:1px;background:#c4c4c4"></div>
<div class="b" style="left:0;top:32px;width:1920px;height:38px;background:#f7f7f7"></div>
<div class="b" style="left:0;top:70px;width:1920px;height:1px;background:#dadada"></div>
<svg class="i" style="left:278px;top:0" width="256" height="32" viewBox="0 0 256 32"><path d="M0 32C5 32 8 29 8 24V8C8 3 11 0 16 0H240C245 0 248 3 248 8V24C248 29 251 32 256 32Z" fill="#f7f7f7"/></svg>
<svg class="i" style="left:16px;top:8px" width="16" height="16" viewBox="0 0 16 16" ><rect x="1.7" y="1.700" width="12.600" height="12.600" rx="2.400" fill="none" stroke="#000" stroke-width="1.400"/><path d="M1.700 4.100c0-1.400 1-2.400 2.400-2.400h7.800c1.400 0 2.400 1 2.400 2.400v.9H1.700z" fill="#000"/><path d="M5 5v9" stroke="#000" stroke-width="1.300"/></svg>
<div class="b" style="left:47px;top:7px;width:1px;height:19px;background:#7a7a7a"></div>
<svg class="i" style="left:58px;top:8px" width="16" height="16" viewBox="0 0 16 16" ><rect width="16" height="16" fill="#2f77bd"/><g transform="translate(1.300 1.500) scale(.274) translate(-9.300 -6)"><path d="M31.200 6.500Q32 5.700 33.200 6L56.800 11.900Q59.600 12.900 57.900 15.300L38 38Q37 39 35.800 38.600L13.200 32.700Q10.300 31.600 12.200 28.800Z" fill="#fff"/><path d="M12.800 31.200C9.200 33.600 9.200 40 12.600 41.300L38.600 50.500 57.500 26.900V21.900" fill="none" stroke="#fff" stroke-width="4" stroke-linecap="round" stroke-linejoin="miter"/><path d="M30.200 14.100L47.300 18.500Q48.500 19 47.700 20L46.600 21.400Q45.900 22.200 44.800 21.900L27.800 17.500Q26.600 17 27.400 16L28.500 14.600Q29.200 13.800 30.200 14.100Z" fill="#2f77bd"/></g></svg>
<span class="t" style="left:84.50px;top:9.87px;font-size:12.5px;line-height:12.5px;color:#1a1a1a;letter-spacing:-0.378px;">user-agent.user_agent - The Coll</span>
<div class="b" style="left:232px;top:6px;width:26px;height:20px;background:linear-gradient(90deg,rgba(205,205,205,0),#cdcdcd 92%)"></div>
<svg class="i" style="left:266.6px;top:12.5px" width="7.4" height="7.4" viewBox="0 0 7.4 7.4" ><path d="M0.300 0.300L7.1 7.1M7.1 0.300L0.300 7.1" stroke="#111" stroke-width="1.5" stroke-linecap="round"/></svg>
<svg class="i" style="left:296px;top:6.8px" width="18" height="18" viewBox="0 0 16 16" ><g fill="none" stroke="#1a1a1a" stroke-width="1.150" stroke-linejoin="round"><circle cx="8" cy="8" r="2.300"/><path d="M6.700 1.300l-.5 1.900-1 .6-1.900-.6-1.300 2.300 1.400 1.400v1.200L2 9.500l1.300 2.300 1.900-.6 1 .6.500 1.900h2.600l.5-1.900 1-.6 1.900.6L14 9.500l-1.400-1.400V6.900L14 5.500l-1.300-2.300-1.900.6-1-.6-.5-1.900z" transform="translate(0 .6)"/></g></svg>
<span class="t" style="left:323.10px;top:9.87px;font-size:12.5px;line-height:12.5px;color:#1a1a1a;letter-spacing:-0.310px;">Settings</span>
<svg class="i" style="left:505.6px;top:12.5px" width="7.4" height="7.4" viewBox="0 0 7.4 7.4" ><path d="M0.300 0.300L7.1 7.1M7.1 0.300L0.300 7.1" stroke="#111" stroke-width="1.5" stroke-linecap="round"/></svg>
<svg class="i" style="left:536px;top:9px" width="14" height="14" viewBox="0 0 14 14" ><path d="M7 .5v13M.5 7h13" stroke="#111" stroke-width="1.200"/></svg>
<div class="b" style="left:1800px;top:14px;width:10px;height:1px;background:#111"></div>
<svg class="i" style="left:1846px;top:9px" width="10" height="10" viewBox="0 0 10 10" ><rect x=".5" y="2.500" width="7" height="7" rx="1" fill="none" stroke="#111" stroke-width="1"/><path d="M2.500 2.500V1.500a1 1 0 0 1 1-1H8.500a1 1 0 0 1 1 1V6.500a1 1 0 0 1-1 1H7.500" fill="none" stroke="#111" stroke-width="1"/></svg>
<svg class="i" style="left:1892px;top:9px" width="10" height="10" viewBox="0 0 10 10" ><path d="M0 0L10 10M10 0L0 10" stroke="#111" stroke-width="1.050"/></svg>
<svg class="i" style="left:20px;top:43px" width="16" height="15" viewBox="0 0 16 15" ><path d="M15.700 7.500H1M7.400 .8L.8 7.500l6.600 6.700" fill="none" stroke="#111" stroke-width="1.250" stroke-linecap="round" stroke-linejoin="round"/></svg>
<svg class="i" style="left:64px;top:43px" width="16" height="15" viewBox="0 0 16 15" ><path d="M.3 7.500H15M8.600 .8l6.600 6.700-6.600 6.700" fill="none" stroke="#c3c3c3" stroke-width="1.250" stroke-linecap="round" stroke-linejoin="round"/></svg>
<svg class="i" style="left:107.5px;top:42.5px" width="17" height="17" viewBox="0 0 17 17" ><path d="M14.900 6.200A7 7 0 1 0 15.400 9.700" fill="none" stroke="#111" stroke-width="1.250" stroke-linecap="round"/><path d="M15.300 1.400v4.900h-4.900" fill="none" stroke="#111" stroke-width="1.250" stroke-linecap="round" stroke-linejoin="round"/></svg>
<div class="b" style="left:144.500px;top:36px;width:1583.500px;height:30px;background:#fff;border-radius:4px"></div>
<svg class="i" style="left:157.5px;top:42.5px" width="17" height="17" viewBox="-6 -6 268 268" ><path d="M231.05 190.54a93.73 93.73 0 01-10.54 4.71 101.87 101.87 0 01-35.9 6.46c-47.32 0-88.54-32.55-88.54-74.32A31.48 31.48 0 01112.5 100.1c-42.8 1.8-53.8 46.4-53.8 72.53 0 73.88 68.09 81.37 82.76 81.37 7.91 0 19.84-2.3 27-4.56l1.31-.44a128.34 128.34 0 0066.6-52.8 4 4 0 00-5.32-5.66z" fill="#777"/><path d="M105.73 241.42a79.2 79.2 0 01-22.74-21.34 80.72 80.72 0 0129.53-120c3.12-1.47 8.45-4.13 15.54-4a32.35 32.35 0 0125.69 13 31.88 31.88 0 016.36 18.66c0-.21 24.46-79.6-80-79.6-43.9 0-80 41.66-80 78.21a130.15 130.15 0 0012.11 56 128 128 0 00156.38 67.11 75.55 75.55 0 01-62.78-8z" fill="#777" stroke="#fff" stroke-width="9"/><path d="M152.33 148.86c-.81 1.05-3.3 2.5-3.3 5.66 0 2.61 1.7 5.12 4.72 7.23 14.38 10 41.49 8.68 41.56 8.68a59.56 59.56 0 0030.27-8.35A61.38 61.38 0 00256 109.2c.26-22.41-8-37.31-11.34-43.91C223.48 23.86 177.74 0 128 0A128 128 0 000 126.2c.48-36.54 36.8-66.05 80-66.05 3.5 0 23.46.34 42 10.07 16.34 8.58 24.9 18.94 30.85 29.21 6.18 10.67 7.28 24.15 7.28 29.52s-2.74 13.33-7.8 19.91z" fill="#777" stroke="#fff" stroke-width="9"/></svg>
<span class="t" style="left:182.00px;top:44.12px;font-size:14px;line-height:14px;color:#6a6a6a;letter-spacing:-0.668px;">Edge</span>
<div class="b" style="left:224px;top:43px;width:1px;height:16px;background:#9a9a9a"></div>
<span class="t" style="left:237.00px;top:44.12px;font-size:14px;line-height:14px;color:#6a6a6a;letter-spacing:0.329px;">edge://</span>
<span class="t" style="left:282.10px;top:44.12px;font-size:14px;line-height:14px;color:#111;letter-spacing:-0.007px;">settings</span>
<span class="t" style="left:330.10px;top:44.12px;font-size:14px;line-height:14px;color:#6a6a6a;letter-spacing:-0.129px;">/clearBrowserData</span>
<svg class="i" style="left:1699.2px;top:42.3px" width="18" height="18" viewBox="0 0 18 18" ><path d="M8.80 1.40L11.15 6.06L16.31 6.86L12.60 10.54L13.44 15.69L8.80 13.30L4.16 15.69L5.00 10.54L1.29 6.86L6.45 6.06Z" fill="none" stroke="#767676" stroke-width="1.150" stroke-linejoin="round"/><circle cx="13.500" cy="13.300" r="5" fill="#fff"/><circle cx="13.500" cy="13.300" r="4.200" fill="#747474"/><path d="M13.500 10.900v4.800M11.100 13.300h4.800" stroke="#fff" stroke-width="1.200"/></svg>
<svg class="i" style="left:1747.2px;top:42.3px" width="18" height="18" viewBox="0 0 18 18" ><path d="M8.80 1.40L11.15 6.06L16.31 6.86L12.60 10.54L13.44 15.69L8.80 13.30L4.16 15.69L5.00 10.54L1.29 6.86L6.45 6.06Z" fill="none" stroke="#111" stroke-width="1.200" stroke-linejoin="round"/><rect x="10.600" y="4.900" width="7.400" height="13.100" fill="#f7f7f7"/><path d="M12.300 6.300h4.700M10.900 9.200h6.100M10.900 12.100h6.100" stroke="#111" stroke-width="1.200" stroke-linecap="round"/></svg>
<svg class="i" style="left:1792px;top:43px" width="17" height="16" viewBox="0 0 17 16" ><path d="M4.300 11.300H3.500A2.200 2.200 0 0 1 1.400 9.700L.7 3.900A2.200 2.200 0 0 1 2.500 1.400L7.400.7A2.200 2.200 0 0 1 9.900 2.500l.1.900" fill="none" stroke="#111" stroke-width="1.150" stroke-linecap="round"/><rect x="5.500" y="4.500" width="10.700" height="10.700" rx="2.300" fill="#f7f7f7" stroke="#111" stroke-width="1.150"/><path d="M10.850 6.900v5.900M7.900 9.850h5.900" stroke="#111" stroke-width="1.150" stroke-linecap="round"/></svg>
<svg class="i" style="left:1834px;top:39px" width="24" height="24" viewBox="0 0 24 24" ><circle cx="12" cy="12" r="12" fill="#2b70ba"/><g transform="translate(2.300 3) scale(.38) translate(-9.300 -6)"><path d="M31.200 6.500Q32 5.700 33.200 6L56.800 11.900Q59.600 12.900 57.900 15.300L38 38Q37 39 35.800 38.600L13.200 32.700Q10.300 31.600 12.200 28.800Z" fill="#fff"/><path d="M12.800 31.200C9.200 33.600 9.200 40 12.600 41.300L38.600 50.500 57.500 26.900V21.900" fill="none" stroke="#fff" stroke-width="3.8" stroke-linecap="round" stroke-linejoin="miter"/><path d="M30.200 14.100L47.300 18.500Q48.500 19 47.700 20L46.600 21.400Q45.900 22.200 44.800 21.900L27.800 17.500Q26.600 17 27.400 16L28.500 14.600Q29.200 13.800 30.200 14.100Z" fill="#2b70ba"/></g></svg>
<svg class="i" style="left:1885px;top:49px" width="14" height="4" viewBox="0 0 14 4" ><circle cx="1.700" cy="2" r="1.250" fill="#111"/><circle cx="7" cy="2" r="1.250" fill="#111"/><circle cx="12.300" cy="2" r="1.250" fill="#111"/></svg>
<div class="b" style="left:0;top:1032px;width:1920px;height:48px;background:linear-gradient(90deg,rgb(229,239,250) 0.00%,rgb(226,236,250) 15.62%,rgb(219,228,248) 26.04%,rgb(216,224,246) 32.29%,rgb(215,221,245) 35.94%,rgb(213,226,249) 40.62%,rgb(214,226,248) 46.88%,rgb(216,222,245) 57.81%,rgb(213,225,248) 65.10%,rgb(217,221,241) 72.92%,rgb(225,232,246) 79.17%,rgb(227,237,248) 85.94%,rgb(224,236,247) 100.00%)"></div>
<svg class="i" style="left:816.6px;top:1045px" width="24" height="23" viewBox="0 0 24 23" ><defs><linearGradient id="wg" x1="0" y1="0" x2="1" y2="1"><stop offset="0" stop-color="#5fcbff"/><stop offset="1" stop-color="#0a74d6"/></linearGradient></defs><path d="M0 0h11.200v10.700H0zM12.700 0H24v10.700H12.700zM0 12.200h11.200V23H0zM12.700 12.200H24V23H12.700z" fill="url(#wg)"/></svg>
<svg class="i" style="left:861px;top:1044.5px" width="24" height="24" viewBox="0 0 24 24" ><circle cx="12.800" cy="9.800" r="7.200" fill="none" stroke="#1d2430" stroke-width="2.300"/><path d="M7.700 15L1.900 21.400" stroke="#1d2430" stroke-width="2.500" stroke-linecap="round"/></svg>
<svg class="i" style="left:905px;top:1045px" width="23" height="22" viewBox="0 0 23 22" ><defs><linearGradient id="tv1" x1="0" y1="0" x2="1" y2="1"><stop offset="0" stop-color="#fff"/><stop offset="1" stop-color="#c9c9c9"/></linearGradient><linearGradient id="tv2" x1="0" y1="0" x2="1" y2="1"><stop offset="0" stop-color="#3a3a3a"/><stop offset="1" stop-color="#111"/></linearGradient></defs><rect x="0" y="6.500" width="17.500" height="15.500" rx="1" fill="url(#tv2)"/><rect x="6" y="0" width="17" height="15" rx="1" fill="url(#tv1)"/><rect x="6" y="6.500" width="11.500" height="8.500" fill="#bdbdbd" opacity=".85"/></svg>
<svg class="i" style="left:948.75px;top:1045px" width="24.5" height="22" viewBox="0 0 24.500 22" ><rect width="24.500" height="22" rx="1.500" fill="#0d5ea8"/><rect x="2.200" y="2.200" width="9" height="17.600" fill="#fafafa"/><rect x="13.200" y="2.200" width="9.100" height="10" fill="#40e0dc"/><rect x="13.200" y="12.200" width="9.100" height="3.800" fill="#27b9c6"/><rect x="13.200" y="16" width="9.100" height="3.800" fill="#1a9cb8"/></svg>
<svg class="i" style="left:992.8px;top:1044.4px" width="24.5" height="22" viewBox="0 0 24.500 22" ><path d="M0 2.500A1.500 1.500 0 0 1 1.500 1H8l2.500 3H0z" fill="#e2a21c"/><path d="M0 4h23a1.500 1.500 0 0 1 1.500 1.500V20.500A1.500 1.500 0 0 1 23 22H1.500A1.500 1.500 0 0 1 0 20.500z" fill="#fbcd4a"/><path d="M0 4h10.500l1.500 1.500H24.500V5.500A1.500 1.500 0 0 0 23 4z" fill="#f4b92e"/><path d="M5 22v-4.500A1.500 1.500 0 0 1 6.500 16h11.500a1.500 1.500 0 0 1 1.500 1.500V22z" fill="#1a86dc"/><rect x="5" y="16" width="14.500" height="1.700" rx=".8" fill="#3aa3ee"/></svg>
<div class="b" style="left:1030.300px;top:1037.250px;width:37.500px;height:38px;border-radius:4px;background:rgba(255,255,255,.6);box-shadow:0 0 0 .5px rgba(255,255,255,.55)"></div>
<svg class="i" style="left:1037px;top:1044px" width="24.5" height="24.5" viewBox="0 0 256 256" ><defs><linearGradient id="eat" x1="58" y1="177" x2="237" y2="177" gradientUnits="userSpaceOnUse"><stop offset="0" stop-color="#0c59a4"/><stop offset="1" stop-color="#114a8b"/></linearGradient><linearGradient id="ebt" x1="157" y1="100" x2="46" y2="221" gradientUnits="userSpaceOnUse"><stop offset="0" stop-color="#1b9de2"/><stop offset=".16" stop-color="#1595df"/><stop offset=".67" stop-color="#0680d7"/><stop offset="1" stop-color="#0078d4"/></linearGradient><radialGradient id="ect" cx="25" cy="47" r="280" gradientUnits="userSpaceOnUse"><stop offset="0" stop-color="#35c1f1"/><stop offset=".25" stop-color="#2fc2df"/><stop offset=".5" stop-color="#2bc3d2"/><stop offset=".72" stop-color="#36c752"/><stop offset="1" stop-color="#66eb6e"/></radialGradient></defs><path d="M231.05 190.54a93.73 93.73 0 01-10.54 4.71 101.87 101.87 0 01-35.9 6.46c-47.32 0-88.54-32.55-88.54-74.32A31.48 31.48 0 01112.5 100.1c-42.8 1.8-53.8 46.4-53.8 72.53 0 73.88 68.09 81.37 82.76 81.37 7.91 0 19.84-2.3 27-4.56l1.31-.44a128.34 128.34 0 0066.6-52.8 4 4 0 00-5.32-5.66z" fill="url(#eat)"/><path d="M105.73 241.42a79.2 79.2 0 01-22.74-21.34 80.72 80.72 0 0129.53-120c3.12-1.47 8.45-4.13 15.54-4a32.35 32.35 0 0125.69 13 31.88 31.88 0 016.36 18.66c0-.21 24.46-79.6-80-79.6-43.9 0-80 41.66-80 78.21a130.15 130.15 0 0012.11 56 128 128 0 00156.38 67.11 75.55 75.55 0 01-62.78-8z" fill="url(#ebt)"/><path d="M152.33 148.86c-.81 1.05-3.3 2.5-3.3 5.66 0 2.61 1.7 5.12 4.72 7.23 14.38 10 41.49 8.68 41.56 8.68a59.56 59.56 0 0030.27-8.35A61.38 61.38 0 00256 109.2c.26-22.41-8-37.31-11.34-43.91C223.48 23.86 177.74 0 128 0A128 128 0 000 126.2c.48-36.54 36.8-66.05 80-66.05 3.5 0 23.46.34 42 10.07 16.34 8.58 24.9 18.94 30.85 29.21 6.18 10.67 7.28 24.15 7.28 29.52s-2.74 13.33-7.8 19.91z" fill="url(#ect)"/></svg>
<div class="b" style="left:1041px;top:1072px;width:16px;height:3px;border-radius:1.500px;background:#1a7fd6"></div>
<svg class="i" style="left:1081px;top:1044px" width="23.5" height="24" viewBox="0 0 23.500 24" ><path d="M7 6V4.200A2.200 2.200 0 0 1 9.200 2h5.100a2.200 2.200 0 0 1 2.200 2.200V6" fill="none" stroke="#2a2a2a" stroke-width="1.900"/><path d="M0 6h23.500v16.500a1.500 1.500 0 0 1-1.500 1.500H1.500A1.500 1.500 0 0 1 0 22.500z" fill="#2b2b2b"/><rect x="6.700" y="10.200" width="4.600" height="4.600" fill="#f25022"/><rect x="12.200" y="10.200" width="4.600" height="4.600" fill="#7fba00"/><rect x="6.700" y="15.700" width="4.600" height="4.600" fill="#00a4ef"/><rect x="12.200" y="15.700" width="4.600" height="4.600" fill="#ffb900"/></svg>
<svg class="i" style="left:1660px;top:1026px" width="62" height="54" viewBox="0 0 62 54" ><path d="M31.200 6.500Q32 5.700 33.200 6L56.800 11.900Q59.600 12.900 57.900 15.300L38 38Q37 39 35.800 38.600L13.200 32.700Q10.300 31.600 12.200 28.800Z" fill="#7b7f85"/><path d="M12.800 31.200C9.200 33.600 9.200 40 12.600 41.300L38.600 50.500 57.500 26.900V21.900" fill="none" stroke="#7b7f85" stroke-width="3.5" stroke-linecap="round" stroke-linejoin="miter"/><path d="M30.200 14.100L47.300 18.500Q48.500 19 47.700 20L46.600 21.400Q45.900 22.200 44.800 21.900L27.800 17.500Q26.600 17 27.400 16L28.500 14.600Q29.200 13.800 30.200 14.100Z" fill="#e4edf8"/></svg>
<span class="t" style="left:1734.00px;top:1046.37px;font-size:18.5px;line-height:18.5px;color:rgba(112,120,130,.72);letter-spacing:-0.059px;">The Collection Book</span>
<svg class="i" style="left:1744px;top:1052px" width="13" height="8" viewBox="0 0 13 8" ><path d="M.6 7L6.500 1l5.900 6" fill="none" stroke="#000" stroke-width="1.300"/></svg>
<svg class="i" style="left:1770px;top:1047.5px" width="16" height="16.5" viewBox="0 0 16 16.500" ><g fill="none" stroke="#000" stroke-width="1.200"><rect x=".5" y="3.500" width="10.500" height="8" rx=".8"/><path d="M5.700 11.500v3M2.500 14.800h7M13 9v6"/><rect x="11.800" y=".6" width="2.600" height="5.400" rx=".9" fill="#dfeaf6"/><path d="M13.100 2v1.500"/></g></svg>
<svg class="i" style="left:1794px;top:1050.5px" width="13" height="11" viewBox="0 0 13 11" ><g fill="none" stroke="#000" stroke-width="1.200"><path d="M.6 3.600h2.600L6.200.8v9.400L3.200 7.400H.6z"/><path d="M8.300 3a3.600 3.600 0 0 1 0 5M10.300 1.300a6 6 0 0 1 0 8.400" stroke-linecap="round"/></g></svg>
<span class="t" style="left:1832.80px;top:1044.47px;font-size:10.3px;line-height:10.3px;color:#0a0a0a;-webkit-text-stroke:0.15px currentColor;letter-spacing:1.036px;">9:37 AM</span>
<span class="t" style="left:1826.30px;top:1060.47px;font-size:10.3px;line-height:10.3px;color:#0a0a0a;-webkit-text-stroke:0.15px currentColor;letter-spacing:0.586px;">7/15/2021</span>
<svg class="i" style="left:1884.5px;top:1049px" width="15" height="15" viewBox="0 0 15 15" ><g fill="none" stroke="#000" stroke-width="1.200"><path d="M7.500 .8A6.800 6.800 0 1 1 2.200 11.800C6.500 11.800 9.500 8.500 7.500 .8z"/></g></svg>
</body></html>
